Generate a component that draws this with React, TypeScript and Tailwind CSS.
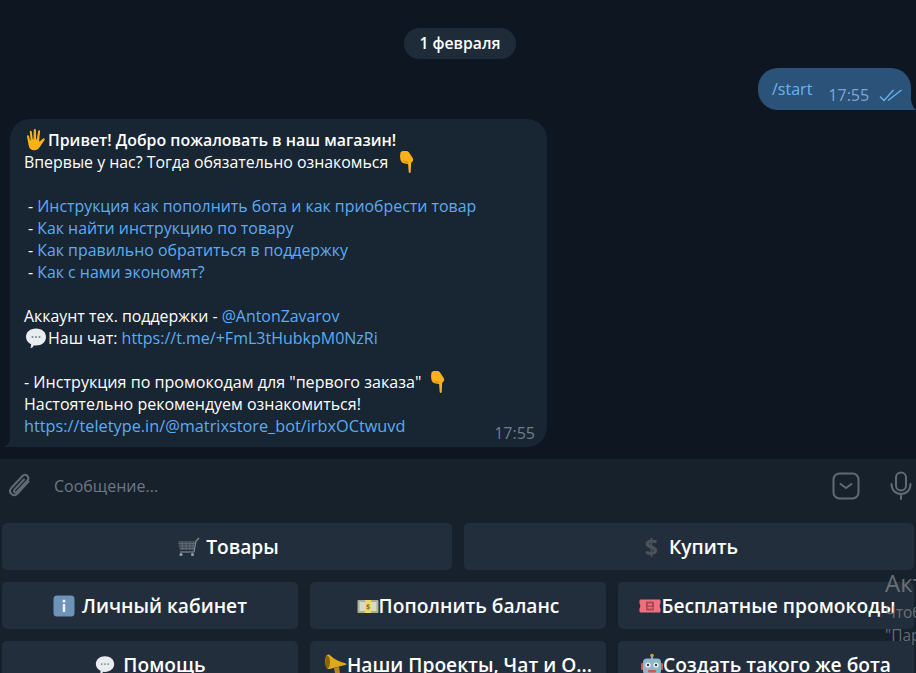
import React from "react";

const font = { fontFamily: '"Open Sans", "Noto Sans", sans-serif' };

function HandEmoji() {
  return (
    <svg width="24" height="24" viewBox="0 0 24 24" className="inline-block shrink-0">
      <path fill="#fbb11c" d="M7.200 21.500c-2-1.300-2.500-3.400-2.900-6L3 8.500c-.2-1.300 1.500-1.600 1.900-.4l1.200 4.300.5-.1L5.800 3.900c-.2-1.400 1.800-1.600 2-.2l1 7.700.6-.1L9.800 2c0-1.400 2-1.400 2.100 0l.3 9.400.6 0 1.300-8.200c.2-1.400 2.200-1.100 2 .3l-1 9.200c-.1.700.4.900.8.500l3-2.500c1.200-1 2.500.4 1.500 1.500L16.500 18c-1.300 1.900-2.300 3.500-4.600 4-1.900.3-3.400.4-4.700-.500z" />
    </svg>
  );
}

function PointDown() {
  return (
    <svg width="20" height="24" viewBox="0 0 20 24" className="inline-block shrink-0">
      <path fill="#fbb11c" d="M3.500 2.500C4 1.500 5.200 1 6.500 1h2.500c1.500 0 2.500.6 3.400 1.900l3.300 5.100c.7 1.200.7 2.500-.2 3.500l-1.300 1.300-.5 9.200c-.1 1.200-1.900 1.200-2 0l-.6-8-3.500-.5C5.500 13.200 3.800 11.500 3.400 9.500L3 6z" />
      <path fill="#e5930c" d="M5 10.500l5.500.8 1 1.700-4-.4z" />
    </svg>
  );
}

function BubbleEmoji({ size = 24 }: { size?: number }) {
  return (
    <svg width={size} height={size} viewBox="0 0 24 24" className="inline-block shrink-0">
      <path fill="#e9edf0" d="M12 2.500c5.800 0 10 3.500 10 8.500s-4.200 8.500-10 8.500c-.8 0-1.500-.1-2.200-.2-.3 1.300-1.600 2.700-3.800 3 .9-1 1.200-2.400 1.100-4C4 16.900 2 14.200 2 11c0-5 4.200-8.500 10-8.500z" />
      <circle cx="8.500" cy="11" r="1" fill="#7a8794" />
      <circle cx="12" cy="11" r="1" fill="#7a8794" />
      <circle cx="15.500" cy="11" r="1" fill="#7a8794" />
    </svg>
  );
}

function CartEmoji() {
  return (
    <svg width="23" height="22" viewBox="0 0 23 22" className="inline-block shrink-0">
      <path fill="#3f4a54" d="M1 5h17l-1.500 9H3z" />
      <path stroke="#6c7680" strokeWidth="0.600" fill="none" d="M1 7.500h17M1.500 10h16M2.500 12.500h14.500M5 5l.7 9M9 5l.3 9M13 5l-.2 9M16.500 5l-.8 9" />
      <path stroke="#8c959d" strokeWidth="1.100" fill="none" d="M22 2l-3 3-2 11H3" />
      <circle cx="4" cy="18.500" r="1.500" fill="#9aa3ab" />
      <circle cx="15.500" cy="18.500" r="1.500" fill="#9aa3ab" />
    </svg>
  );
}

function InfoEmoji() {
  return (
    <svg width="22" height="22" viewBox="0 0 22 22" className="inline-block shrink-0">
      <rect x="0.500" y="0.500" width="21" height="21" rx="3.500" fill="#6f93b8" />
      <circle cx="11" cy="6" r="1.500" fill="#eef3f8" />
      <rect x="9.800" y="9" width="2.400" height="8" fill="#eef3f8" />
    </svg>
  );
}

function MoneyEmoji() {
  return (
    <svg width="22" height="22" viewBox="0 0 22 22" className="inline-block shrink-0">
      <rect x="0.500" y="5" width="21" height="13" rx="1" fill="#a7b196" />
      <rect x="2.500" y="7" width="17" height="9" fill="#d5dbc7" />
      <rect x="8" y="5" width="6" height="13" fill="#f3d469" />
      <text x="11" y="14" fontSize="7" textAnchor="middle" fill="#6b5a1a">$</text>
    </svg>
  );
}

function TicketEmoji() {
  return (
    <svg width="22" height="22" viewBox="0 0 22 22" className="inline-block shrink-0">
      <path fill="#f0707f" d="M2 4.500h18c1 0 1.500.5 1.500 1.500v2.500c-1 .5-1 4.500 0 5V16c0 1-.5 1.500-1.500 1.500H2c-1 0-1.500-.5-1.500-1.500v-2.500c1-.5 1-4.500 0-5V6c0-1 .5-1.500 1.500-1.500z" />
      <rect x="7" y="6.500" width="8" height="9" fill="#a84a56" />
      <rect x="9" y="8.500" width="4" height="2" fill="#f0707f" />
      <rect x="8.500" y="12" width="5" height="1.500" fill="#f0707f" />
    </svg>
  );
}

function MegaphoneEmoji() {
  return (
    <svg width="23" height="24" viewBox="0 0 23 24" className="inline-block shrink-0">
      <path fill="#e0a91c" d="M3 2c1.500-1 2.500-.5 4 1 3 2.800 8 6 15 7.500.6.200.6 1 0 1.200L5.500 16C3.200 16.500 2 14.500 1.500 11 1 7 1.500 3 3 2z" />
      <path fill="#8a6508" d="M3 2.500c1.800 0 3 3 3 6.500s-1 6-2.500 6.500C2 15.500 1.300 12 1.500 9 1.700 5.500 2 3 3 2.500z" />
      <path fill="#b98a12" d="M10 15l5-1.300.8 5.300c.1 1-.6 1.500-1.500 1.500h-2c-.8 0-1.300-.5-1.500-1.300z" />
    </svg>
  );
}

function RobotEmoji() {
  return (
    <svg width="22" height="24" viewBox="0 0 22 24" className="inline-block shrink-0">
      <circle cx="11" cy="2.500" r="1.800" fill="#e0a01c" />
      <rect x="10" y="3" width="2" height="3" fill="#9aa5ad" />
      <rect x="0" y="10" width="3" height="7" rx="1" fill="#d2574f" />
      <rect x="19" y="10" width="3" height="7" rx="1" fill="#d2574f" />
      <rect x="2" y="5.500" width="18" height="16" rx="4" fill="#8cb8c8" />
      <circle cx="7" cy="12" r="2.600" fill="#f3f6f7" />
      <circle cx="15" cy="12" r="2.600" fill="#f3f6f7" />
      <circle cx="7" cy="12" r="1.200" fill="#2f3d46" />
      <circle cx="15" cy="12" r="1.200" fill="#2f3d46" />
      <rect x="7" y="17" width="8" height="2.500" rx="1" fill="#d2574f" />
    </svg>
  );
}

function KeyButton({ children }: { children: React.ReactNode }) {
  return (
    <button className="h-[47px] min-w-0 pt-[2px] rounded-[5px] bg-[#232e3c] text-white text-[19.2px] font-semibold flex items-center justify-center whitespace-nowrap">
      {children}
    </button>
  );
}

function Link({ children }: { children: React.ReactNode }) {
  return <span className="text-[#5eabf1]">{children}</span>;
}

export default function App() {
  return (
    <div className="relative h-[673px] w-[916px] overflow-hidden bg-[#17212b] flex flex-col" style={font}>
      {/* Messages */}
      <div className="h-[459px] shrink-0 bg-[#0e1621] flex flex-col">
        <div className="flex justify-center pt-[28px] pl-[4px]">
          <span className="h-[31px] w-[112px] rounded-full bg-[#1e2c3a] text-white text-[15.700px] font-semibold flex items-center justify-center">
            1 февраля
          </span>
        </div>

        <div className="flex justify-end mt-[9px] pr-[5px]">
          <div className="relative h-[42px] w-[153px] rounded-t-[20px] rounded-bl-[20px] bg-[#2b5278] flex items-center pl-[14px]">
            <span className="text-[16px] text-[#6ab3f3]">/start</span>
            <span className="text-[16px] text-[#7da8d3] ml-[16px] mt-[11px]">17:55</span>
            <svg width="24" height="14" viewBox="0 0 24 14" className="ml-[10px] mt-[12px] shrink-0">
              <path d="M1 8.500l4 4L14.500 2M9 12.500L22.500 2" stroke="#6ab3f3" strokeWidth="1.300" fill="none" />
            </svg>
            <svg width="8" height="14" viewBox="0 0 8 14" className="absolute -right-[5px] bottom-0">
              <path d="M0 0h2.500c.5 6 2 11 5.500 14H0z" fill="#2b5278" />
            </svg>
          </div>
        </div>

        <div className="mt-[9px] ml-[10px] relative w-[537px] h-[328px] rounded-[20px] rounded-bl-none bg-[#182533] pl-[14px] pt-[10px] text-[15.900px] leading-[22px] text-white">
          <div className="flex items-center h-[22px] font-semibold">
            <HandEmoji />
            <span>Привет! Добро пожаловать в наш магазин!</span>
          </div>
          <div className="flex items-center h-[22px]">
            <span>Впервые у нас? Тогда обязательно ознакомься</span>
            <span className="ml-[9px] flex"><PointDown /></span>
          </div>
          <div className="h-[22px]" />
          <div className="pl-[4px]"> - <Link>Инструкция как пополнить бота и как приобрести товар</Link></div>
          <div className="pl-[4px]"> - <Link>Как найти инструкцию по товару</Link></div>
          <div className="pl-[4px]"> - <Link>Как правильно обратиться в поддержку</Link></div>
          <div className="pl-[4px]"> - <Link>Как с нами экономят?</Link></div>
          <div className="h-[22px]" />
          <div>Аккаунт тех. поддержки - <Link>@AntonZavarov</Link></div>
          <div className="flex items-center h-[22px] text-[16px]">
            <BubbleEmoji />
            <span>Наш чат:&nbsp;<Link>https://t.me/+FmL3tHubkpM0NzRi</Link></span>
          </div>
          <div className="h-[22px]" />
          <div className="flex items-center h-[22px] text-[16.100px]">
            <span>- Инструкция по промокодам для "первого заказа"</span>
            <span className="ml-[7px] flex"><PointDown /></span>
          </div>
          <div className="text-[16px]">Настоятельно рекомендуем ознакомиться!</div>
          <div className="text-[16.300px]"><Link>https://teletype.in/@matrixstore_bot/irbxOCtwuvd</Link></div>
          <span className="absolute right-[12px] bottom-[3px] text-[16px] text-[#6d7f8f]">17:55</span>
          <svg width="10" height="14" viewBox="0 0 10 14" className="absolute -left-[8px] bottom-0">
            <path d="M10 0c0 6-3 11-8 14h8z" fill="#182533" />
          </svg>
        </div>
      </div>

      {/* Composer */}
      <div className="h-[54px] shrink-0 flex items-center pl-[7px] pr-[3px] text-[#5f6b76]">
        <svg width="26" height="28" viewBox="0 0 26 28" fill="none" stroke="currentColor" strokeWidth="2" strokeLinecap="round">
          <path d="M21.500 9.500L10.500 21.500c-1.800 2-4.300 2-6 .5s-1.800-4-.2-6L15.500 4c1.300-1.400 3.300-1.500 4.700-.2s1.400 3.200.2 4.600L9.800 20c-.7.700-1.700.8-2.400.1s-.6-1.600 0-2.300L17 7.500" />
        </svg>
        <span className="ml-[21px] text-[16px] text-[#6d7883]">Сообщение...</span>
        <div className="flex-1" />
        <svg width="28" height="28" viewBox="0 0 28 28" fill="none" stroke="currentColor" strokeWidth="2" strokeLinecap="round" strokeLinejoin="round">
          <rect x="1.500" y="1.500" width="25" height="25" rx="6" />
          <path d="M8.500 12l5.500 4 5.500-4" />
        </svg>
        <svg width="22" height="30" viewBox="0 0 22 30" fill="none" stroke="currentColor" strokeWidth="2" strokeLinecap="round" className="ml-[30px] mr-[1px]">
          <rect x="6" y="1.500" width="10" height="18" rx="5" />
          <path d="M1.500 13c0 6 4 10 9.500 10s9.500-4 9.500-10M11 23v5" />
        </svg>
      </div>

      {/* Bot keyboard */}
      <div className="pt-[10px] px-[2px] flex flex-col gap-[12px]">
        <div className="grid grid-cols-2 gap-[12px]">
          <KeyButton>
            <span className="flex items-center gap-[6px] pl-[2px]"><CartEmoji />Товары</span>
          </KeyButton>
          <KeyButton>
            <span className="flex items-center pl-[5px]">
              <span className="font-bold text-[23px] leading-none text-[#4c5259] mr-[11px]">$</span>Купить
            </span>
          </KeyButton>
        </div>
        <div className="grid grid-cols-3 gap-[12px]">
          <KeyButton>
            <span className="flex items-center gap-[7px]"><InfoEmoji />Личный кабинет</span>
          </KeyButton>
          <KeyButton>
            <span className="flex items-center"><MoneyEmoji />Пополнить баланс</span>
          </KeyButton>
          <KeyButton>
            <span className="flex items-center pl-[3px]"><TicketEmoji />Бесплатные промокоды</span>
          </KeyButton>
        </div>
        <div className="grid grid-cols-3 gap-[12px]">
          <KeyButton>
            <span className="flex items-center gap-[7px]"><BubbleEmoji size={22} />Помощь</span>
          </KeyButton>
          <KeyButton>
            <span className="flex items-center"><MegaphoneEmoji />Наши Проекты, Чат и О...</span>
          </KeyButton>
          <KeyButton>
            <span className="flex items-center"><RobotEmoji />Создать такого же бота</span>
          </KeyButton>
        </div>
      </div>

      {/* Windows activation watermark */}
      <div className="absolute left-[885px] top-[568px] whitespace-nowrap text-[#8a8f94]/70 pointer-events-none">
        <div className="text-[24px] leading-[30px]">Активация Windows</div>
        <div className="text-[15.500px] leading-[23px] mt-[3px]">Чтобы активировать Windows,</div>
        <div className="text-[15.500px] leading-[23px]">"Параметры"</div>
      </div>
    </div>
  );
}
